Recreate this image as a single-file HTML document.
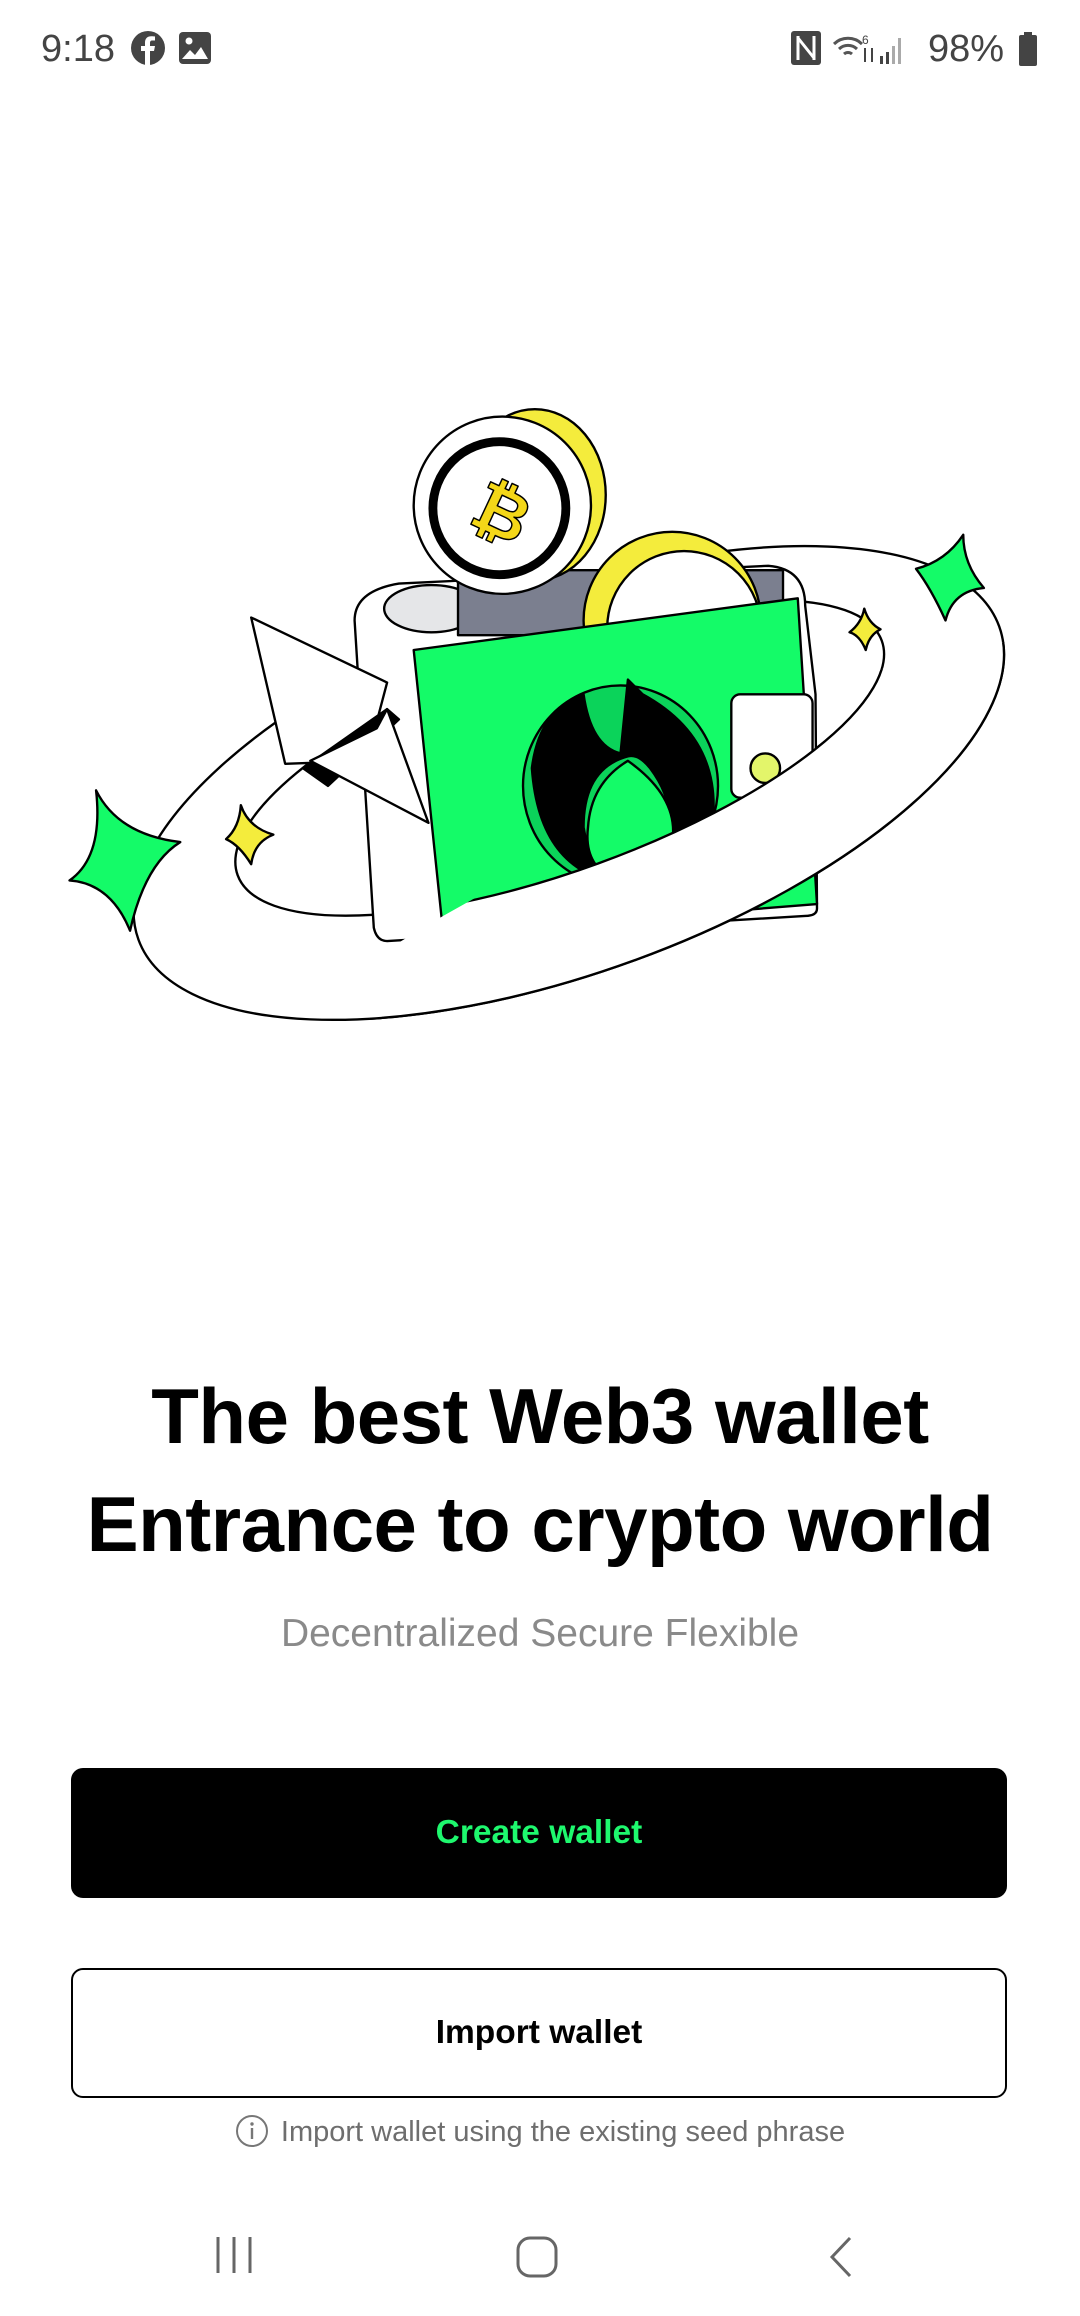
<!DOCTYPE html>
<html><head><meta charset="utf-8"><style>
html,body{margin:0;padding:0;background:#fff;width:1080px;height:2316px;overflow:hidden;font-family:"Liberation Sans",Roboto,sans-serif;position:relative}
.abs{position:absolute}
.sb{top:28px;font-size:38px;color:#444}
h1{position:absolute;left:0;width:1080px;margin:0;text-align:center;font-weight:bold;font-size:78px;color:#000;line-height:108px;top:1362px;letter-spacing:-0.5px}
.sub{top:1612px;width:1080px;text-align:center;font-size:39px;color:#8a8a8a}
.btn{left:71px;width:936px;box-sizing:border-box;border-radius:12px;text-align:center;font-weight:bold;font-size:33.5px}
.info{top:2114px;left:0;width:1080px;text-align:center;font-size:29px;color:#6e6e6e}
</style></head><body>
<div class="abs sb" style="left:41px">9:18</div>
<svg class="abs" style="left:130px;top:30px" width="36" height="36" viewBox="0 0 36 36"><circle cx="18" cy="18" r="17" fill="#444"/><path d="M20 36V21h4l1-5h-5v-3c0-1.5.5-2.5 2.5-2.5H25V6.5c-.5 0-2-.2-3.8-.2-3.7 0-6.2 2.2-6.2 6.3V16h-4v5h4v15z" fill="#fff"/></svg>
<svg class="abs" style="left:178px;top:31px" width="34" height="34" viewBox="0 0 34 34"><rect x="1" y="1" width="32" height="32" rx="4" fill="#444"/><circle cx="11" cy="10" r="3.5" fill="#fff"/><path d="M4 28l8-9 5 5 6-8 7 12z" fill="#fff"/></svg>
<svg class="abs" style="left:790px;top:30px" width="32" height="36" viewBox="0 0 32 36"><rect x="1" y="1" width="30" height="34" rx="3" fill="#444"/><path d="M8 6v24M24 6v24M8 8l16 20" stroke="#fff" stroke-width="3" fill="none"/></svg>
<svg class="abs" style="left:832px;top:30px" width="80" height="36" viewBox="0 0 80 36"><path d="M2 14a20 20 0 0 1 28 0M7 19a13 13 0 0 1 18 0M12 24a6 6 0 0 1 8 0" stroke="#555" stroke-width="3" fill="none"/><text x="30" y="14" font-size="12" fill="#444">6</text><path d="M33 18v14M40 18v14" stroke="#444" stroke-width="2"/><rect x="48" y="26" width="3" height="8" fill="#444"/><rect x="54" y="22" width="3" height="12" fill="#444"/><rect x="60" y="16" width="3" height="18" fill="#aaa"/><rect x="66" y="8" width="3" height="26" fill="#aaa"/></svg>
<div class="abs sb" style="left:928px">98%</div>
<svg class="abs" style="left:1018px;top:32px" width="20" height="34" viewBox="0 0 20 34"><rect x="6" y="0" width="8" height="4" fill="#444"/><rect x="1" y="3" width="18" height="31" rx="2" fill="#444"/></svg>

<svg class="abs" style="left:0;top:0" width="1080" height="1100" viewBox="0 0 731 744.6">
<defs><clipPath id="front"><polygon points="250,650 300,620 620,440 731,430 731,744 250,744"/></clipPath></defs>
<g stroke="#000" stroke-width="1.6" stroke-linejoin="round">
<g transform="rotate(-20 385 530)"><ellipse cx="385" cy="530" rx="310" ry="128" fill="#fff"/><ellipse cx="385" cy="512" rx="232" ry="76" fill="#fff" transform="rotate(0)"/></g>
<path fill="#fff" d="M240 420 Q240 400 270 395 L520 383 Q545 385 545 410 L552 470 L553 615 Q553 620 545 620 L262 637 Q255 637 253 628 Z"/>
<ellipse cx="292" cy="412" rx="32" ry="16" fill="#e5e6e8"/>
<rect x="310" y="386" width="220" height="44" fill="#7b7f8f"/>
<circle cx="455" cy="420" r="60" fill="#f4ec3c"/><circle cx="463" cy="425" r="52" fill="#fff"/>
<ellipse cx="362" cy="335" rx="48" ry="58" fill="#f4ec3c"/>
<circle cx="340" cy="342" r="60" fill="#fff"/>
<circle cx="338" cy="344" r="45" fill="#fff" stroke-width="6"/>
<text x="322" y="362" font-size="46" font-weight="bold" fill="#f4d718" stroke="#000" stroke-width="1" transform="rotate(25 338 344)" font-family="Liberation Sans">₿</text>
<path fill="#14fb68" d="M280 440 L540 405 L553 612 L300 632 Z"/>
<rect x="495" y="470" width="55" height="70" rx="6" fill="#fff"/>
<circle cx="518" cy="520" r="10" fill="#e3f56a"/>
<ellipse cx="420" cy="532" rx="66" ry="68" fill="#0bd35a"/>
<path fill="#000" d="M360 520 Q365 480 395 470 Q400 505 420 510 L425 460 L435 470 Q490 500 482 560 Q470 590 430 595 Q470 560 440 520 Q432 510 425 512 Q395 520 395 560 Q400 590 420 598 Q365 590 360 520Z"/>
<path fill="#14fb68" d="M425 515 Q460 540 455 570 Q445 595 415 595 Q395 585 398 560 Q400 530 425 515Z"/>
<polygon fill="#fff" points="170,418 262,462 248,515 193,517"/>
<polygon fill="#000" points="205,520 262,480 270,487 222,532"/>
<polygon fill="#fff" points="210,515 255,493 262,480 290,557"/>
<path fill="#14fb68" d="M65 535 Q80 565 122 570 Q98 585 88 630 Q75 598 47 596 Q70 580 65 535Z"/>
<path fill="#14fb68" d="M652 362 Q652 382 666 398 Q645 400 640 420 Q630 398 620 385 Q640 380 652 362Z"/>
<path fill="#f4ec3c" d="M163 545 Q168 560 185 565 Q172 570 170 585 Q162 572 153 568 Q162 560 163 545Z"/>
<path fill="#f4ec3c" d="M585 412 Q588 422 596 426 Q588 430 586 440 Q582 430 575 428 Q583 422 585 412Z"/>
<g clip-path="url(#front)"><path fill="#fff" fill-rule="evenodd" transform="rotate(-20 385 530)" d="M75 530 A310 128 0 1 0 695 530 A310 128 0 1 0 75 530Z M153 512 A232 76 0 1 0 617 512 A232 76 0 1 0 153 512Z"/></g>
</g>
</svg>

<h1>The best Web3 wallet<br>Entrance to crypto world</h1>
<div class="abs sub">Decentralized Secure Flexible</div>
<div class="abs btn" style="top:1768px;height:130px;line-height:130px;background:#000;color:#1ef86e">Create wallet</div>
<div class="abs btn" style="top:1968px;height:130px;line-height:126px;border:2px solid #000;color:#000">Import wallet</div>
<div class="abs info"><svg width="34" height="34" viewBox="0 0 34 34" style="vertical-align:-7px;margin-right:12px"><circle cx="17" cy="17" r="15" fill="none" stroke="#777" stroke-width="2"/><rect x="15.8" y="14" width="2.4" height="11" fill="#777"/><circle cx="17" cy="10" r="1.7" fill="#777"/></svg>Import wallet using the existing seed phrase</div>

<svg class="abs" style="left:210px;top:2235px" width="50" height="40"><path d="M8 2v36M24 2v36M40 2v36" stroke="#666" stroke-width="3"/></svg>
<svg class="abs" style="left:515px;top:2235px" width="44" height="44"><rect x="3" y="3" width="38" height="38" rx="12" fill="none" stroke="#666" stroke-width="3"/></svg>
<svg class="abs" style="left:826px;top:2235px" width="30" height="44"><path d="M24 3L6 22l18 19" fill="none" stroke="#666" stroke-width="3"/></svg>
</body></html>
